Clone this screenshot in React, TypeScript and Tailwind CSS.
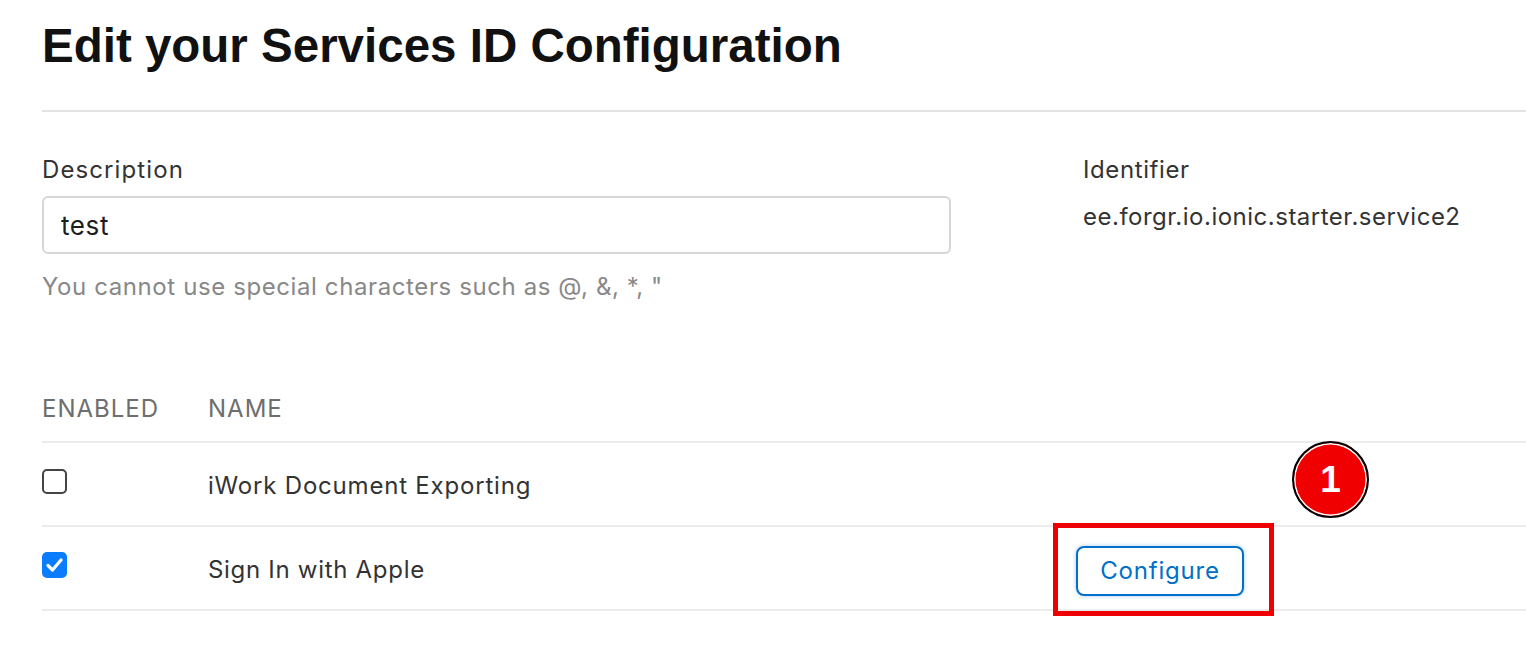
import React from "react";

const body = "font-['Inter','Liberation_Sans',sans-serif]";

export default function App() {
  return (
    <div className={`relative w-[1526px] h-[654px] overflow-hidden bg-white pl-[42px] ${body}`}>
      <div className="h-[112px] border-b-2 border-[#e3e3e3] pt-[22px]">
        <h1 className="font-['Liberation_Sans',Arial,sans-serif] font-bold text-[47.5px] leading-none text-[#111111]">
          Edit your Services ID Configuration
        </h1>
      </div>

      <div className="flex pt-[42px]">
        <div className="w-[909px] flex flex-col">
          <div className="h-[28px] leading-[28px] pt-[2px] text-[24px] tracking-[1.1px] text-[#333333]">Description</div>
          <div className="mt-[14px] h-[58px] rounded-[6px] border-2 border-[#d6d6d6] flex items-center pl-[17px] text-[26px] tracking-[0.6px] text-[#1d1d1f]">
            test
          </div>
          <div className="mt-[19px] h-[28px] leading-[28px] text-[24px] tracking-[0.6px] text-[#888888]">
            You cannot use special characters such as @, &amp;, *, "
          </div>
        </div>
        <div className="ml-[132px] flex flex-col">
          <div className="h-[28px] leading-[28px] pt-[2px] text-[24px] tracking-[0.6px] text-[#333333]">Identifier</div>
          <div className="mt-[21px] h-[28px] leading-[28px] text-[24px] tracking-[0.5px] text-[#333333]">
            ee.forgr.io.ionic.starter.service2
          </div>
        </div>
      </div>

      <div className="mt-[80px]">
        <div className="flex items-center h-[62px] pb-[4px] border-b-2 border-[#ececec] text-[24px] tracking-[1px] text-[#6e6e6e]">
          <div className="w-[166px]">ENABLED</div>
          <div>NAME</div>
        </div>
        <div className="flex items-center h-[84px] border-b-2 border-[#ececec] text-[24px] tracking-[0.8px] text-[#333333]">
          <div className="w-[166px] flex">
            <div className="w-[25px] h-[25px] rounded-[5px] border-2 border-[#444444] bg-white mb-[6px]" />
          </div>
          <div className="pt-[4px]">iWork Document Exporting</div>
        </div>
        <div className="flex items-center h-[84px] border-b-2 border-[#ececec] text-[24px] tracking-[0.7px] text-[#333333]">
          <div className="w-[166px] flex">
            <div className="w-[25px] h-[26px] rounded-[5px] bg-[#0a7cff] flex items-center justify-center mb-[6px]">
              <svg width="17" height="14" viewBox="0 0 17 14" fill="none">
                <path d="M2 7.5 L6.5 12 L15 2" stroke="white" strokeWidth="3.2" strokeLinecap="round" strokeLinejoin="round" />
              </svg>
            </div>
          </div>
          <div className="w-[868px] pt-[4px]">Sign In with Apple</div>
          <button className="mt-[5px] w-[168px] h-[50px] rounded-[8px] border-2 border-[#0070c9] text-[#0070c9] text-[24px] tracking-[0.8px] shadow-[0_0_4px_rgba(0,113,227,0.35)] flex items-center justify-center">
            Configure
          </button>
        </div>
      </div>

      <div className="absolute left-[1053px] top-[523px] w-[221px] h-[93px] border-[5px] border-[#ee0000]" />

      <div className="absolute left-[1292px] top-[441px] w-[77px] h-[77px] rounded-full bg-[#f00000] border-2 border-black shadow-[inset_0_0_0_1.5px_white] flex items-center justify-center">
        <span className="font-['Liberation_Sans',Arial,sans-serif] font-bold text-[37px] leading-none text-white">1</span>
      </div>
    </div>
  );
}
